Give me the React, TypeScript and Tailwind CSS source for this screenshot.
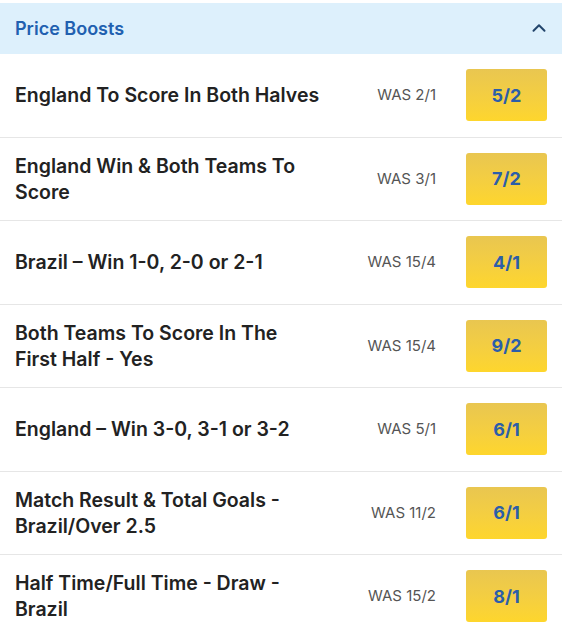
import { ChevronUp } from "lucide-react";

interface Boost {
  id: number;
  title: string;
  was: string;
  odds: string;
}

const boosts: Boost[] = [
  { id: 1, title: "England To Score In Both Halves", was: "2/1", odds: "5/2" },
  { id: 2, title: "England Win & Both Teams To Score", was: "3/1", odds: "7/2" },
  { id: 3, title: "Brazil – Win 1-0, 2-0 or 2-1", was: "15/4", odds: "4/1" },
  { id: 4, title: "Both Teams To Score In The First Half - Yes", was: "15/4", odds: "9/2" },
  { id: 5, title: "England – Win 3-0, 3-1 or 3-2", was: "5/1", odds: "6/1" },
  { id: 6, title: "Match Result & Total Goals - Brazil/Over 2.5", was: "11/2", odds: "6/1" },
  { id: 7, title: "Half Time/Full Time - Draw - Brazil", was: "15/2", odds: "8/1" },
];

function BoostRow({ boost }: { boost: Boost }) {
  return (
    <div className="flex h-[83.5px] items-center border-b border-[#e6e6e6] px-[15px]">
      <div className="w-[306px] text-[19.5px] font-semibold leading-[26px] text-[#222]">
        {boost.title}
      </div>
      <div className="flex flex-1 justify-end text-[15px] text-[#555]">
        WAS {boost.was}
      </div>
      <button className="ml-[30px] flex h-[52px] w-[81px] items-center justify-center rounded-[3px] bg-gradient-to-b from-[#e9c650] to-[#fed62c] text-[18px] font-bold text-[#2c5ea9]">
        {boost.odds}
      </button>
    </div>
  );
}

export default function App() {
  return (
    <div className="w-[562px] bg-white pt-[3px] font-['Inter',sans-serif]">
      {/* Header */}
      <div className="flex h-[51px] items-center justify-between bg-[#ddf0fc] pl-[15px] pr-[12px]">
        <span className="text-[18px] font-semibold text-[#2160b0]">Price Boosts</span>
        <ChevronUp size={22} strokeWidth={2.2} className="mb-[2px] text-[#22456c]" />
      </div>
      {boosts.map((b) => (
        <BoostRow key={b.id} boost={b} />
      ))}
    </div>
  );
}
